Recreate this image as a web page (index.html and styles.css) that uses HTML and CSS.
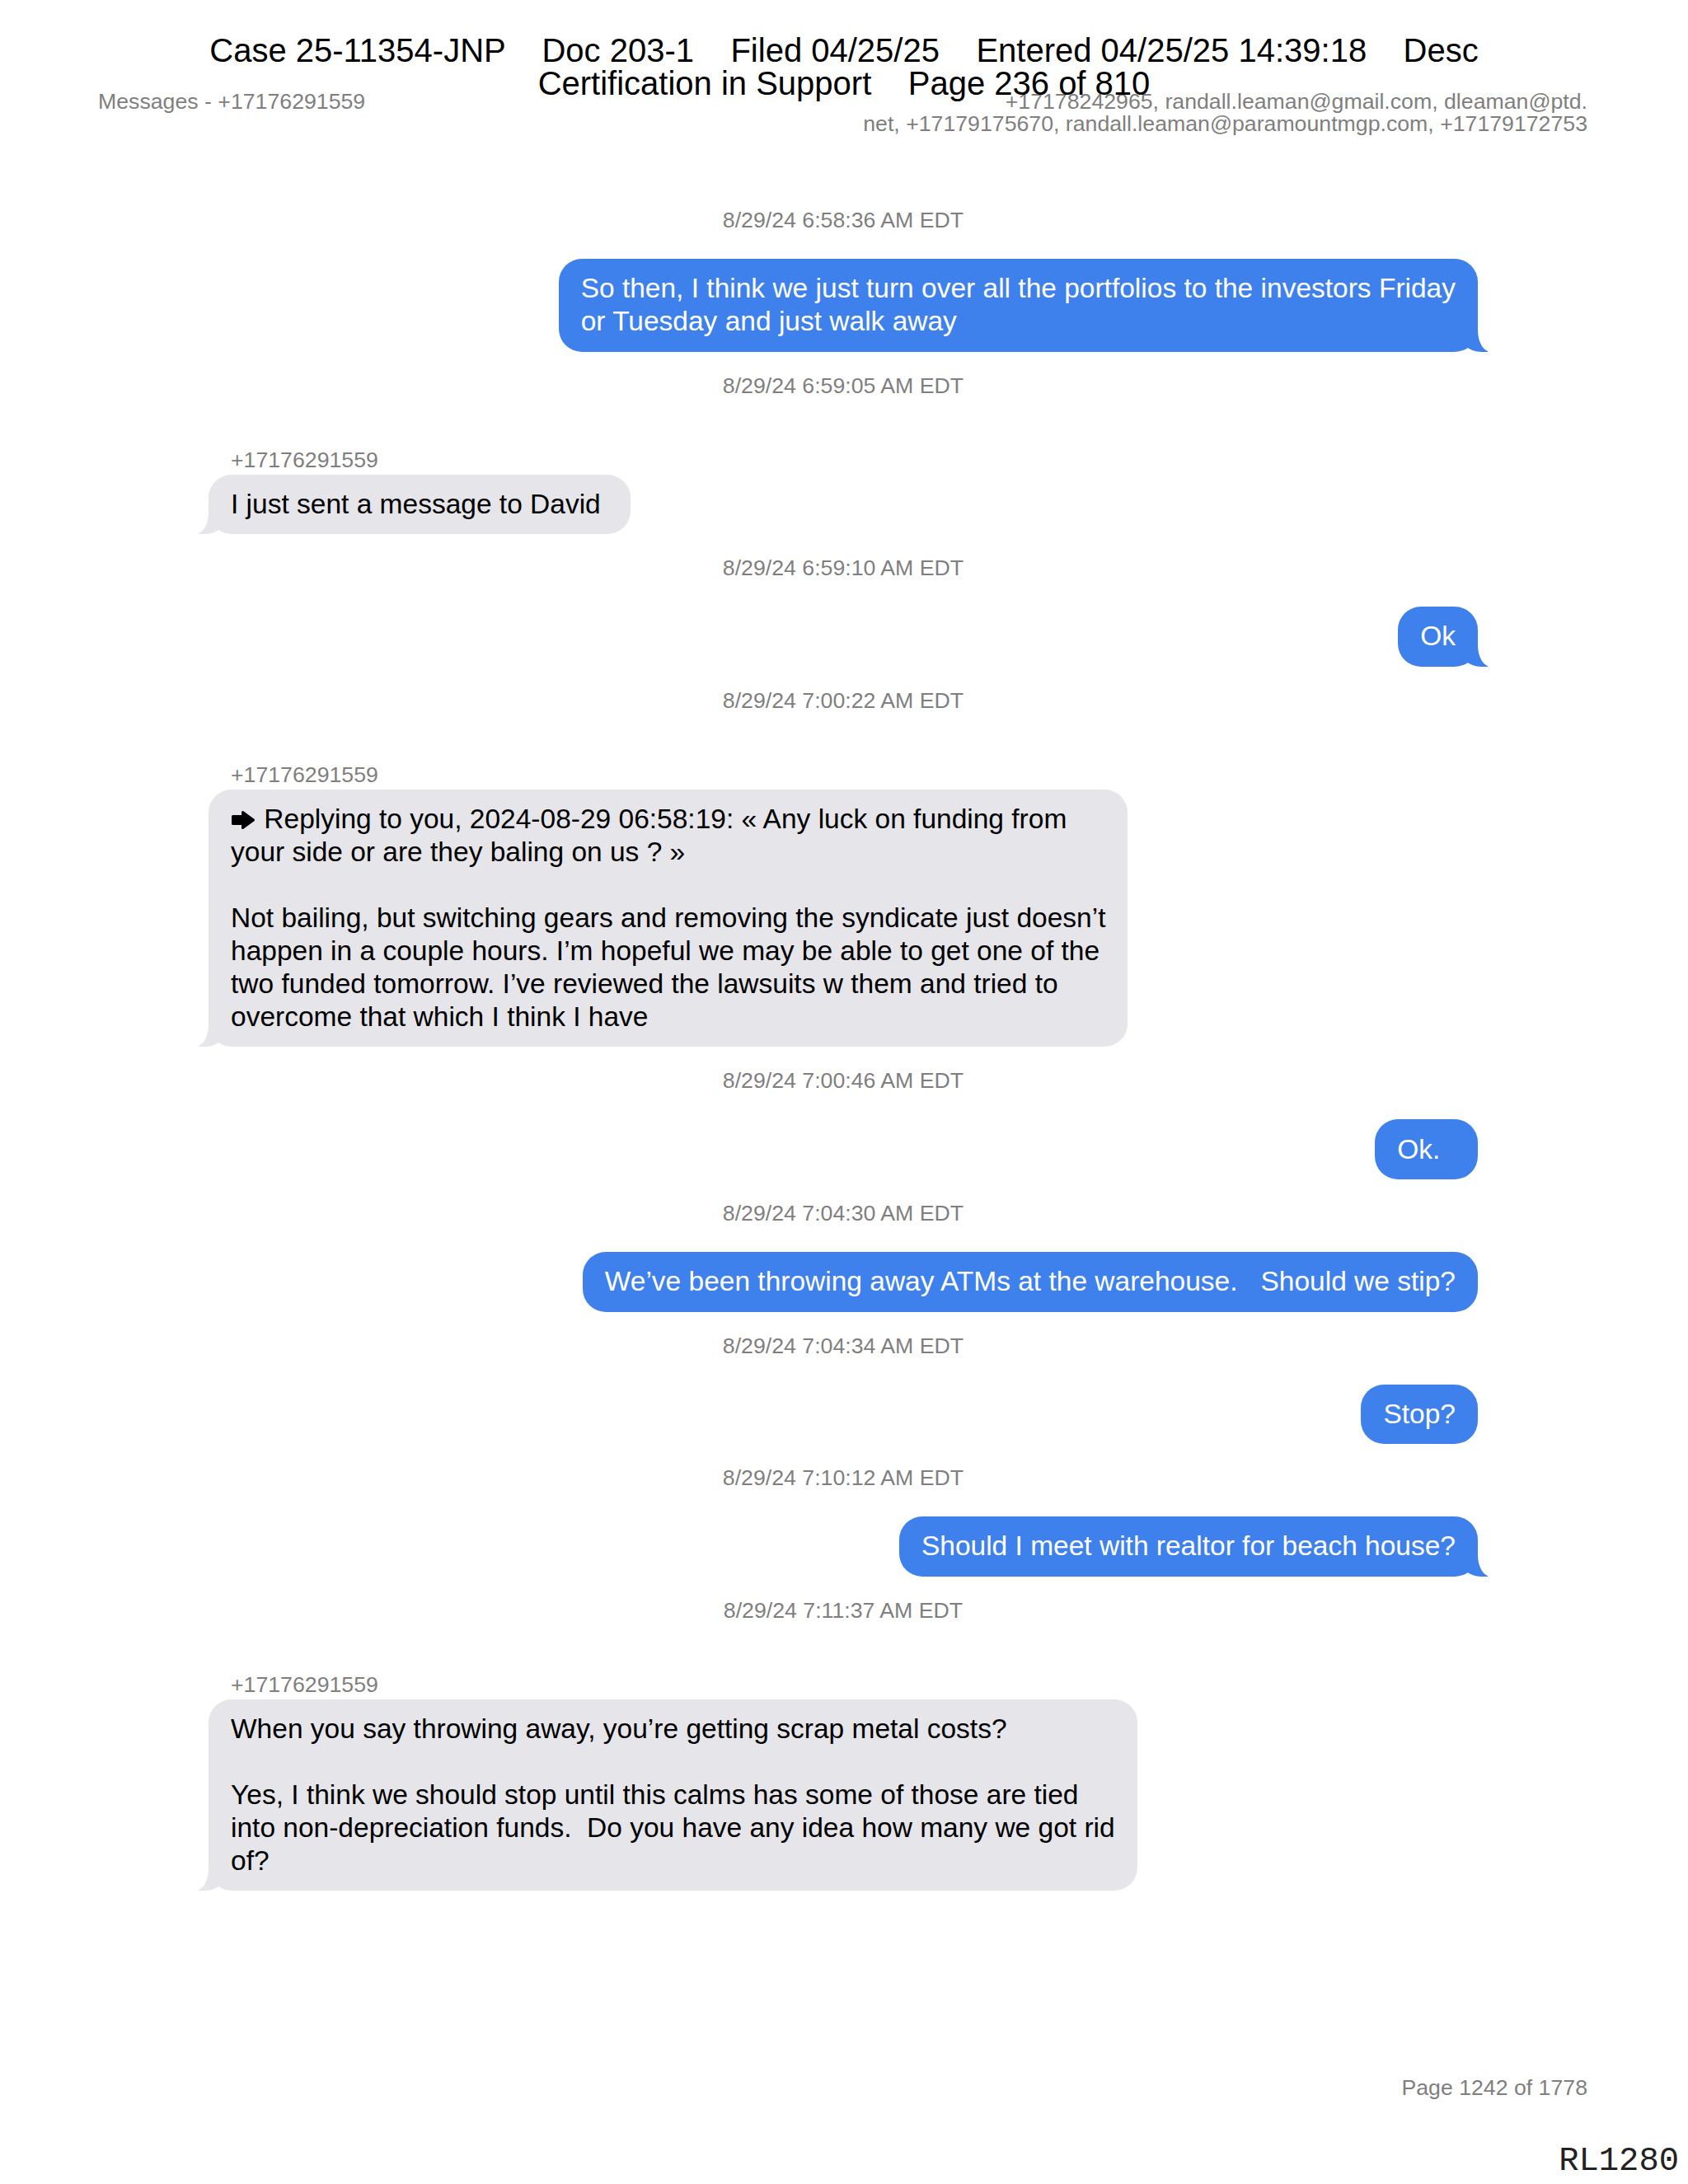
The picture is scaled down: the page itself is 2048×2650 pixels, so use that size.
FILE: index.html
```html
<!DOCTYPE HTML>
<html>
<head>
<meta charset="UTF-8">
<title>Messages - +17176291559</title>
<link rel="stylesheet" href="styles.css">
</head>

<body>
<div id="page">
	<div id="head">
		<div class="title">Messages - +17176291559</div>
		<div class="parties">+17178242965, randall.leaman@gmail.com, dleaman@ptd.<br>net, +17179175670, randall.leaman@paramountmgp.com, +17179172753</div>
	</div>

	<div id="thread">
		<div class="stamp">8/29/24 6:58:36 AM EDT</div>
		<div class="msg me"><div class="bubble tail">So then, I think we just turn over all the portfolios to the investors Friday<br>or Tuesday and just walk away</div></div>

		<div class="stamp">8/29/24 6:59:05 AM EDT</div>
		<div class="msg them">
			<div class="sender">+17176291559</div>
			<div class="bubble tail">I just sent a message to David&nbsp;</div>
		</div>

		<div class="stamp">8/29/24 6:59:10 AM EDT</div>
		<div class="msg me"><div class="bubble tail">Ok</div></div>

		<div class="stamp">8/29/24 7:00:22 AM EDT</div>
		<div class="msg them">
			<div class="sender">+17176291559</div>
			<div class="bubble tail"><svg class="reply-ico" width="30" height="24" viewBox="0 0 30 24"><path d="M2.5 7.5 H14.5 V2.5 L27.5 12 L14.5 21.5 V16.5 H2.5 Z" fill="#000" stroke="#000" stroke-width="3" stroke-linejoin="round"/></svg> Replying to you, 2024-08-29 06:58:19: « Any luck on funding from<br>your side or are they baling on us ? »<br><br>Not bailing, but switching gears and removing the syndicate just doesn’t<br>happen in a couple hours. I’m hopeful we may be able to get one of the<br>two funded tomorrow. I’ve reviewed the lawsuits w them and tried to<br>overcome that which I think I have</div>
		</div>

		<div class="stamp">8/29/24 7:00:46 AM EDT</div>
		<div class="msg me"><div class="bubble">Ok.&nbsp;&nbsp;</div></div>

		<div class="stamp">8/29/24 7:04:30 AM EDT</div>
		<div class="msg me"><div class="bubble">We’ve been throwing away ATMs at the warehouse.   Should we stip?</div></div>

		<div class="stamp">8/29/24 7:04:34 AM EDT</div>
		<div class="msg me"><div class="bubble">Stop?</div></div>

		<div class="stamp">8/29/24 7:10:12 AM EDT</div>
		<div class="msg me"><div class="bubble tail">Should I meet with realtor for beach house?</div></div>

		<div class="stamp">8/29/24 7:11:37 AM EDT</div>
		<div class="msg them">
			<div class="sender">+17176291559</div>
			<div class="bubble tail">When you say throwing away, you’re getting scrap metal costs?<br><br>Yes, I think we should stop until this calms has some of those are tied<br>into non-depreciation funds.  Do you have any idea how many we got rid<br>of?</div>
		</div>
	</div>

	<div id="foot">
		<div class="pageno">Page 1242 of 1778</div>
		<div class="bates">RL1280</div>
	</div>

	<div id="filing">Case 25-11354-JNP    Doc 203-1    Filed 04/25/25    Entered 04/25/25 14:39:18    Desc<br>Certification in Support    Page 236 of 810</div>
</div>
</body>
</html>
```

FILE: styles.css
```css
body {margin:0; background:#fff; font-family:"Liberation Sans", Arial, Helvetica, sans-serif;}
#page {position:relative; width:2048px; height:2650px; display:flex; flex-direction:column; overflow:hidden;}

/* court filing stamp, printed over the page */
#filing {position:absolute; top:41px; left:0; right:0; text-align:center; font-size:40px; line-height:40px; white-space:pre; color:#000;}

#head {display:flex; justify-content:space-between; align-items:flex-start; padding:110px 122px 0 119px; font-size:26.7px; line-height:27px; color:#7f7f7f;}
.parties {text-align:right;}

#thread {padding:62px 255px 0 253px;}
.stamp {margin-top:25px; text-align:center; font-size:26.7px; line-height:32px; color:#7f7f7f;}
.msg {display:flex;}
.msg.me {justify-content:flex-end; margin-top:31px;}
.msg.them {flex-direction:column; align-items:flex-start; margin-top:58px;}
.sender {padding-left:27px; margin-bottom:2px; font-size:26.7px; line-height:32px; color:#7f7f7f;}

.bubble {position:relative; padding:16.3px 27px; border-radius:28px; font-size:33.5px; line-height:40px; white-space:pre-wrap;}
.me .bubble {background:#3f81ec; color:#fff;}
.them .bubble {background:#e5e5ea; color:#000;}
.reply-ico {vertical-align:-2px; margin-right:1px;}

/* bubble tails */
.bubble.tail::before, .bubble.tail::after {content:""; position:absolute; bottom:0; height:38px;}
.me .tail::before {right:-12px; width:34px; background:#3f81ec; border-bottom-left-radius:26px 22px;}
.me .tail::after {right:-40px; width:40px; background:#fff; border-bottom-left-radius:16px 26px;}
.them .tail::before {left:-12px; width:34px; background:#e5e5ea; border-bottom-right-radius:26px 22px;}
.them .tail::after {left:-40px; width:40px; background:#fff; border-bottom-right-radius:16px 26px;}

#foot {margin-top:auto; text-align:right;}
.pageno {padding-right:122px; font-size:26.7px; line-height:32px; color:#7f7f7f;}
.bates {margin-top:50px; padding:0 11px 5px 0; font-family:"Liberation Mono", "Courier New", monospace; font-size:40.5px; line-height:46px; color:#222;}
```
